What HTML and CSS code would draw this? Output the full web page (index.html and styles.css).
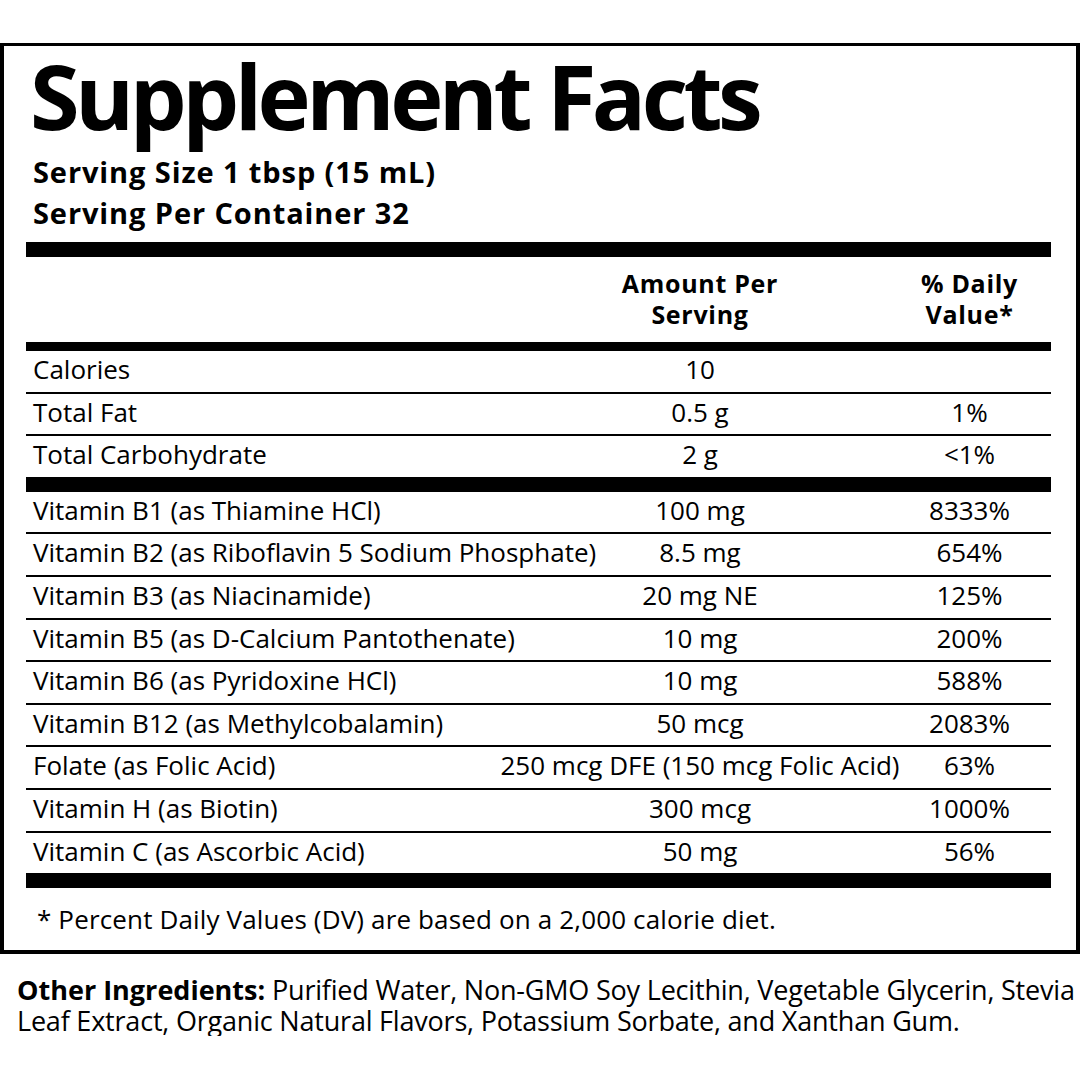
FILE: index.html
```html
<!DOCTYPE html>
<html lang="en">
<head>
<meta charset="utf-8">
<title>Supplement Facts</title>
<link rel="stylesheet" href="styles.css">
</head>
<body>
<div class="label">
  <h1 class="title">Supplement Facts</h1>
  <div class="serving">Serving Size 1 tbsp (15 mL)</div>
  <div class="serving">Serving Per Container 32</div>
  <div class="bar bar-thick"></div>
  <div class="row head">
    <span class="name"></span>
    <span class="amt">Amount Per<br>Serving</span>
    <span class="dv">% Daily<br>Value*</span>
  </div>
  <div class="bar bar-mid"></div>
  <div class="group">
    <div class="row"><span class="name">Calories</span><span class="amt">10</span><span class="dv"></span></div>
    <div class="row"><span class="name">Total Fat</span><span class="amt">0.5 g</span><span class="dv">1%</span></div>
    <div class="row"><span class="name">Total Carbohydrate</span><span class="amt">2 g</span><span class="dv">&lt;1%</span></div>
  </div>
  <div class="bar bar-thick"></div>
  <div class="group">
    <div class="row"><span class="name">Vitamin B1 (as Thiamine HCl)</span><span class="amt">100 mg</span><span class="dv">8333%</span></div>
    <div class="row"><span class="name">Vitamin B2 (as Riboflavin 5 Sodium Phosphate)</span><span class="amt">8.5 mg</span><span class="dv">654%</span></div>
    <div class="row"><span class="name">Vitamin B3 (as Niacinamide)</span><span class="amt">20 mg NE</span><span class="dv">125%</span></div>
    <div class="row"><span class="name">Vitamin B5 (as D-Calcium Pantothenate)</span><span class="amt">10 mg</span><span class="dv">200%</span></div>
    <div class="row"><span class="name">Vitamin B6 (as Pyridoxine HCl)</span><span class="amt">10 mg</span><span class="dv">588%</span></div>
    <div class="row"><span class="name">Vitamin B12 (as Methylcobalamin)</span><span class="amt">50 mcg</span><span class="dv">2083%</span></div>
    <div class="row"><span class="name">Folate (as Folic Acid)</span><span class="amt">250 mcg DFE (150 mcg Folic Acid)</span><span class="dv">63%</span></div>
    <div class="row"><span class="name">Vitamin H (as Biotin)</span><span class="amt">300 mcg</span><span class="dv">1000%</span></div>
    <div class="row"><span class="name">Vitamin C (as Ascorbic Acid)</span><span class="amt">50 mg</span><span class="dv">56%</span></div>
  </div>
  <div class="bar bar-thick"></div>
  <p class="note">* Percent Daily Values (DV) are based on a 2,000 calorie diet.</p>
</div>
<p class="ingredients"><b>Other Ingredients:</b> Purified Water, Non-GMO Soy Lecithin, Vegetable Glycerin, Stevia<br>Leaf Extract, Organic Natural Flavors, Potassium Sorbate, and Xanthan Gum.</p>
</body>
</html>
```

FILE: styles.css
```css
* { box-sizing: border-box; }

body {
  margin: 0;
  background: #fff;
  color: #000;
  font-family: "Open Sans", "Noto Sans", sans-serif;
  font-stretch: 90%;
}

.label {
  margin-top: 43px;
  border: 4px solid #000;
  border-top-width: 3px;
  padding: 4px 25px 0 22px;
}

.title {
  margin: 0;
  padding-left: 4px;
  font-size: 90px;
  line-height: 90px;
  font-weight: 700;
  letter-spacing: -4.5px;
}

.serving {
  padding-left: 7px;
  font-size: 29px;
  line-height: 41px;
  font-weight: 700;
  letter-spacing: 0.9px;
}

.title + .serving { margin-top: 11px; }

.bar { background: #000; }
.bar-thick { height: 15px; }
.bar-mid { height: 9px; }
.serving + .bar { margin-top: 9px; }

.row {
  display: grid;
  grid-template-columns: 464px 420px 125px;
  padding-right: 16px;
  height: 40.6px;
  font-size: 26px;
  line-height: 36px;
  white-space: nowrap;
}

.group .row + .row { border-top: 2px solid #000; height: 42.6px; }

.name { padding-left: 7px; }

.amt, .dv {
  display: flex;
  justify-content: center;
  text-align: center;
}

.dv { padding-right: 6px; }

.head {
  height: 85px;
  padding-top: 11px;
  font-size: 25px;
  line-height: 31px;
  font-weight: 700;
  letter-spacing: 0.7px;
}

.note {
  margin: 16px 0 0;
  padding: 0 0 16px 11px;
  font-size: 26px;
  line-height: 30px;
  letter-spacing: 0.15px;
}

.ingredients {
  margin: 20px 0 0;
  padding-left: 17px;
  font-size: 27px;
  line-height: 31px;
  white-space: nowrap;
  letter-spacing: -0.2px;
}

.ingredients b { letter-spacing: 0; }
```
